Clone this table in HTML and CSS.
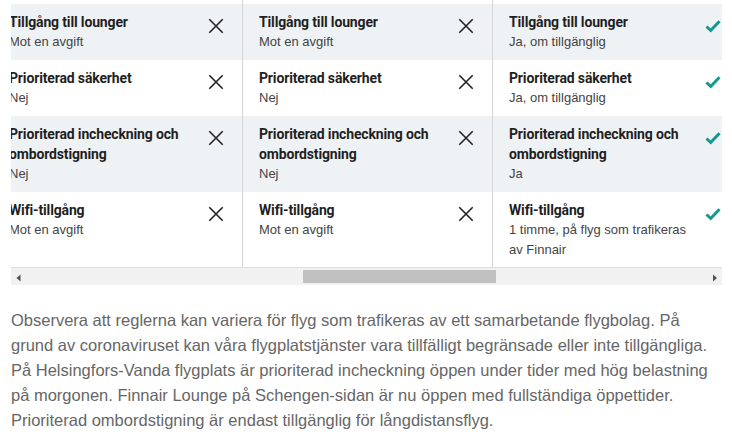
FILE: index.html
```html
<!DOCTYPE html>
<html lang="sv">
<head>
<meta charset="utf-8">
<title>Flygplatstjänster</title>
<link rel="stylesheet" href="styles.css">
</head>
<body>
<main class="page">
  <div class="compare">
    <div class="viewport">
      <div class="grid">
        <div class="spacer"></div><div class="spacer"></div><div class="spacer"></div>

        <div class="cell alt">
          <div class="text"><div class="title">Tillgång till lounger</div><div class="sub">Mot en avgift</div></div>
          <svg class="icon" viewBox="0 0 20 20"><path class="x" d="M5.3 3.3 18.7 16.7M18.7 3.3 5.3 16.7"/></svg>
        </div>
        <div class="cell alt">
          <div class="text"><div class="title">Tillgång till lounger</div><div class="sub">Mot en avgift</div></div>
          <svg class="icon" viewBox="0 0 20 20"><path class="x" d="M5.3 3.3 18.7 16.7M18.7 3.3 5.3 16.7"/></svg>
        </div>
        <div class="cell alt">
          <div class="text"><div class="title">Tillgång till lounger</div><div class="sub">Ja, om tillgänglig</div></div>
          <svg class="icon" viewBox="0 0 20 20"><path class="check" d="M2.5 10.5 6.7 14.5 15.5 5.3"/></svg>
        </div>

        <div class="cell">
          <div class="text"><div class="title">Prioriterad säkerhet</div><div class="sub">Nej</div></div>
          <svg class="icon" viewBox="0 0 20 20"><path class="x" d="M5.3 3.3 18.7 16.7M18.7 3.3 5.3 16.7"/></svg>
        </div>
        <div class="cell">
          <div class="text"><div class="title">Prioriterad säkerhet</div><div class="sub">Nej</div></div>
          <svg class="icon" viewBox="0 0 20 20"><path class="x" d="M5.3 3.3 18.7 16.7M18.7 3.3 5.3 16.7"/></svg>
        </div>
        <div class="cell">
          <div class="text"><div class="title">Prioriterad säkerhet</div><div class="sub">Ja, om tillgänglig</div></div>
          <svg class="icon" viewBox="0 0 20 20"><path class="check" d="M2.5 10.5 6.7 14.5 15.5 5.3"/></svg>
        </div>

        <div class="cell alt">
          <div class="text"><div class="title">Prioriterad incheckning och ombordstigning</div><div class="sub">Nej</div></div>
          <svg class="icon" viewBox="0 0 20 20"><path class="x" d="M5.3 3.3 18.7 16.7M18.7 3.3 5.3 16.7"/></svg>
        </div>
        <div class="cell alt">
          <div class="text"><div class="title">Prioriterad incheckning och ombordstigning</div><div class="sub">Nej</div></div>
          <svg class="icon" viewBox="0 0 20 20"><path class="x" d="M5.3 3.3 18.7 16.7M18.7 3.3 5.3 16.7"/></svg>
        </div>
        <div class="cell alt">
          <div class="text"><div class="title">Prioriterad incheckning och ombordstigning</div><div class="sub">Ja</div></div>
          <svg class="icon" viewBox="0 0 20 20"><path class="check" d="M2.5 10.5 6.7 14.5 15.5 5.3"/></svg>
        </div>

        <div class="cell last">
          <div class="text"><div class="title">Wifi-tillgång</div><div class="sub">Mot en avgift</div></div>
          <svg class="icon" viewBox="0 0 20 20"><path class="x" d="M5.3 3.3 18.7 16.7M18.7 3.3 5.3 16.7"/></svg>
        </div>
        <div class="cell last">
          <div class="text"><div class="title">Wifi-tillgång</div><div class="sub">Mot en avgift</div></div>
          <svg class="icon" viewBox="0 0 20 20"><path class="x" d="M5.3 3.3 18.7 16.7M18.7 3.3 5.3 16.7"/></svg>
        </div>
        <div class="cell last">
          <div class="text"><div class="title">Wifi-tillgång</div><div class="sub">1 timme, på flyg som trafikeras av Finnair</div></div>
          <svg class="icon" viewBox="0 0 20 20"><path class="check" d="M2.5 10.5 6.7 14.5 15.5 5.3"/></svg>
        </div>
      </div>
    </div>
    <div class="scrollbar">
      <svg class="sb-btn" viewBox="0 0 17 17"><polygon class="arrow" points="5.5,10 9.5,6.5 9.5,13.5"/></svg>
      <div class="sb-track"><div class="sb-thumb"></div></div>
      <svg class="sb-btn" viewBox="0 0 17 17"><polygon class="arrow" points="8,6.5 12,10 8,13.5"/></svg>
    </div>
  </div>
  <p class="note">Observera att reglerna kan variera för flyg som trafikeras av ett samarbetande flygbolag. På grund av coronaviruset kan våra flygplatstjänster vara tillfälligt begränsade eller inte tillgängliga. På Helsingfors-Vanda flygplats är prioriterad incheckning öppen under tider med hög belastning på morgonen. Finnair Lounge på Schengen-sidan är nu öppen med fullständiga öppettider. Prioriterad ombordstigning är endast tillgänglig för långdistansflyg.</p>
</main>
</body>
</html>
```

FILE: styles.css
```css
html, body {
  margin: 0;
  background: #ffffff;
}

body {
  font-family: "Liberation Sans", Arial, sans-serif;
}

.page {
  padding: 0 10px 0 11px;
}

.compare {
  width: 711px;
}

.viewport {
  overflow: hidden;
  border-bottom: 1px solid #dedede;
}

.grid {
  display: grid;
  grid-template-columns: repeat(3, 250px);
  grid-template-rows: 4px;
  width: 750px;
  margin-left: -19px;
}

.spacer {
  border-left: 1px solid #d5d5d5;
}

.cell {
  display: flex;
  gap: 8px;
  padding: 8px 18px 8px 16px;
  border-left: 1px solid #d5d5d5;
}

.cell.alt {
  background: #eff2f5;
}

.cell.last {
  padding-bottom: 7px;
}

.text {
  flex: 1;
  min-width: 0;
}

.title {
  font-family: Roboto, "Liberation Sans", sans-serif;
  font-weight: 700;
  font-size: 14px;
  line-height: 20px;
  letter-spacing: -0.15px;
  color: #1f1f1f;
}

.sub {
  font-size: 13px;
  line-height: 20px;
  color: #444444;
}

.icon {
  flex: none;
  width: 20px;
  height: 20px;
  margin-top: 4px;
}

.x {
  fill: none;
  stroke: #222222;
  stroke-width: 1.6;
}

.check {
  fill: none;
  stroke: #129a8e;
  stroke-width: 3;
}

.scrollbar {
  display: flex;
  height: 17px;
  background: #f1f1f1;
}

.sb-btn {
  flex: none;
  width: 17px;
  height: 17px;
}

.arrow {
  fill: #505050;
}

.sb-track {
  flex: 1;
  padding: 2px 0;
}

.sb-thumb {
  margin-left: 275px;
  width: 193px;
  height: 13px;
  background: #c1c1c1;
}

.note {
  margin: 23px 0 0;
  max-width: 702px;
  font-size: 16.5px;
  line-height: 25px;
  color: #666666;
}
```
